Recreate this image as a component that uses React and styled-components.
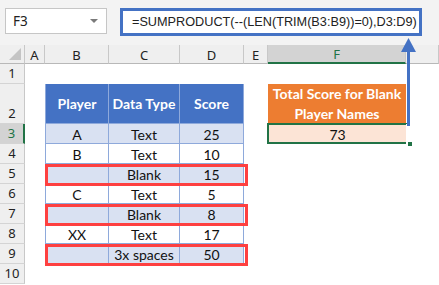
import React from "react";
import styled, { createGlobalStyle, css } from "styled-components";

const Global = createGlobalStyle`
  html, body { margin: 0; padding: 0; background: #ffffff; }
  body { font-family: "Lato", "Liberation Sans", sans-serif; overflow: hidden; }
  * { box-sizing: border-box; }
`;

const Page = styled.div`
  position: relative;
  width: 439px;
  height: 285px;
  overflow: hidden;
  background: #ffffff;
`;

const FormulaBar = styled.div`
  height: 45px;
  background: #f3f3f3;
  display: flex;
  align-items: flex-start;
  padding: 8px 0 0 5px;
  gap: 13px;
`;

const NameBox = styled.div`
  width: 102px;
  height: 26px;
  background: #ffffff;
  border: 1px solid #c6c6c6;
  display: flex;
  align-items: center;
  justify-content: space-between;
  padding: 0 8px 0 7px;
  font-family: "Noto Sans", "Open Sans", sans-serif;
  font-size: 13.5px;
  color: #222;
`;

const Caret = styled.span`
  width: 0;
  height: 0;
  border-left: 4px solid transparent;
  border-right: 4px solid transparent;
  border-top: 4px solid #7a7a7a;
`;

const FormulaBox = styled.div`
  width: 302px;
  height: 28px;
  background: #ffffff;
  border: 3px solid #4472c4;
  display: flex;
  align-items: center;
  padding-left: 9px;
  font-family: "Liberation Sans", "Noto Sans", sans-serif;
  font-size: 12.7px;
  color: #222;
  white-space: nowrap;
  overflow: hidden;
`;

const Sheet = styled.div`
  display: grid;
  grid-template-columns: 25px 20px 64px 71px 64px 24px 138px 1fr;
  grid-template-rows: 19px 20px 40px repeat(8, 20px);
`;

const headFont = css`
  font-family: "Noto Sans", "Open Sans", sans-serif;
  font-size: 13px;
`;

const Corner = styled.div`
  position: relative;
  background: #efefef;
  border-right: 1px solid #c8c8c8;
  border-bottom: 1px solid #b8b8b8;
  &::after {
    content: "";
    position: absolute;
    right: 3px;
    bottom: 3px;
    width: 0;
    height: 0;
    border-left: 12px solid transparent;
    border-bottom: 12px solid #c4c4c4;
  }
`;

const ColHead = styled.div`
  ${headFont};
  background: ${(p) => (p.$selected ? "#d3d3d3" : "#efefef")};
  color: ${(p) => (p.$selected ? "#217346" : "#222")};
  border-right: 1px solid #c8c8c8;
  border-bottom: ${(p) => (p.$selected ? "2px solid #217346" : "1px solid #b8b8b8")};
  display: flex;
  align-items: center;
  justify-content: center;
  padding-top: 1px;
`;

const RowHead = styled.div`
  ${headFont};
  background: ${(p) => (p.$selected ? "#d3d3d3" : "#efefef")};
  color: ${(p) => (p.$selected ? "#217346" : "#222")};
  border-right: ${(p) => (p.$selected ? "2px solid #217346" : "1px solid #c8c8c8")};
  border-bottom: 1px solid #d4d4d4;
  display: flex;
  align-items: flex-end;
  justify-content: center;
  padding-bottom: 1px;
`;

const Empty = styled.div`
  background: #ffffff;
`;

const cellText = css`
  display: flex;
  align-items: center;
  justify-content: center;
  font-size: 14px;
  padding-top: 2px;
`;

const TableHead = styled.div`
  ${cellText};
  background: #4472c4;
  color: #ffffff;
  font-weight: 700;
  padding-top: 0;
  border-right: 1px solid #8ea9db;
  border-bottom: 1px solid #8ea9db;
  border-left: ${(p) => (p.$first ? "1px solid #8ea9db" : "none")};
`;

const TableCell = styled.div`
  ${cellText};
  background: ${(p) => (p.$shade ? "#d9e1f2" : "#ffffff")};
  color: #111;
  border-right: 1px solid #8ea9db;
  border-bottom: 1px solid #8ea9db;
  border-left: ${(p) => (p.$first ? "1px solid #8ea9db" : "none")};
`;

const ResultHead = styled.div`
  ${cellText};
  padding-top: 0;
  background: #ed7d31;
  color: #ffffff;
  font-weight: 700;
  text-align: center;
  line-height: 20px;
`;

const ResultCell = styled.div`
  ${cellText};
  background: #fce4d6;
  color: #111;
  border: 2px solid #217346;
  margin: -1px -2px 0 -1px;
`;

const Highlight = styled.div`
  position: absolute;
  left: 45px;
  width: 203px;
  height: 22px;
  border: 3px solid #fe4040;
  pointer-events: none;
`;

const Handle = styled.div`
  position: absolute;
  left: 407px;
  top: 141px;
  width: 6px;
  height: 6px;
  background: #217346;
  border: 1px solid #ffffff;
`;

const ArrowSvg = styled.svg`
  position: absolute;
  left: 398px;
  top: 36px;
`;

const cols = ["A", "B", "C", "D", "E", "F", "G"];

const rows = [
  ["A", "Text", "25"],
  ["B", "Text", "10"],
  ["", "Blank", "15"],
  ["C", "Text", "5"],
  ["", "Blank", "8"],
  ["XX", "Text", "17"],
  ["", "3x spaces", "50"],
];

export default function App() {
  return (
    <Page>
      <Global />
      <FormulaBar>
        <NameBox>
          <span>F3</span>
          <Caret />
        </NameBox>
        <FormulaBox>=SUMPRODUCT(--(LEN(TRIM(B3:B9))=0),D3:D9)</FormulaBox>
      </FormulaBar>
      <Sheet>
        <Corner />
        {cols.map((c) => (
          <ColHead key={c} $selected={c === "F"}>
            {c === "G" ? "" : c}
          </ColHead>
        ))}

        <RowHead>1</RowHead>
        {cols.map((c) => (
          <Empty key={"r1" + c} />
        ))}

        <RowHead>2</RowHead>
        <Empty />
        <TableHead $first>Player</TableHead>
        <TableHead>Data Type</TableHead>
        <TableHead>Score</TableHead>
        <Empty />
        <ResultHead>
          Total Score for Blank
          <br />
          Player Names
        </ResultHead>
        <Empty />

        {rows.map((r, i) => (
          <React.Fragment key={i}>
            <RowHead $selected={i === 0}>{i + 3}</RowHead>
            <Empty />
            <TableCell $first $shade={i % 2 === 0}>{r[0]}</TableCell>
            <TableCell $shade={i % 2 === 0}>{r[1]}</TableCell>
            <TableCell $shade={i % 2 === 0}>{r[2]}</TableCell>
            <Empty />
            {i === 0 ? <ResultCell>73</ResultCell> : <Empty />}
            <Empty />
          </React.Fragment>
        ))}

        <RowHead>10</RowHead>
        {cols.map((c) => (
          <Empty key={"r10" + c} />
        ))}
      </Sheet>

      <Highlight style={{ top: 164 }} />
      <Highlight style={{ top: 204 }} />
      <Highlight style={{ top: 244 }} />
      <Handle />
      <ArrowSvg width="20" height="92" viewBox="0 0 20 92">
        <rect x="9" y="12" width="3" height="78" fill="#4472c4" />
        <polygon points="10.5,2 3,16 18,16" fill="#4472c4" />
      </ArrowSvg>
    </Page>
  );
}
